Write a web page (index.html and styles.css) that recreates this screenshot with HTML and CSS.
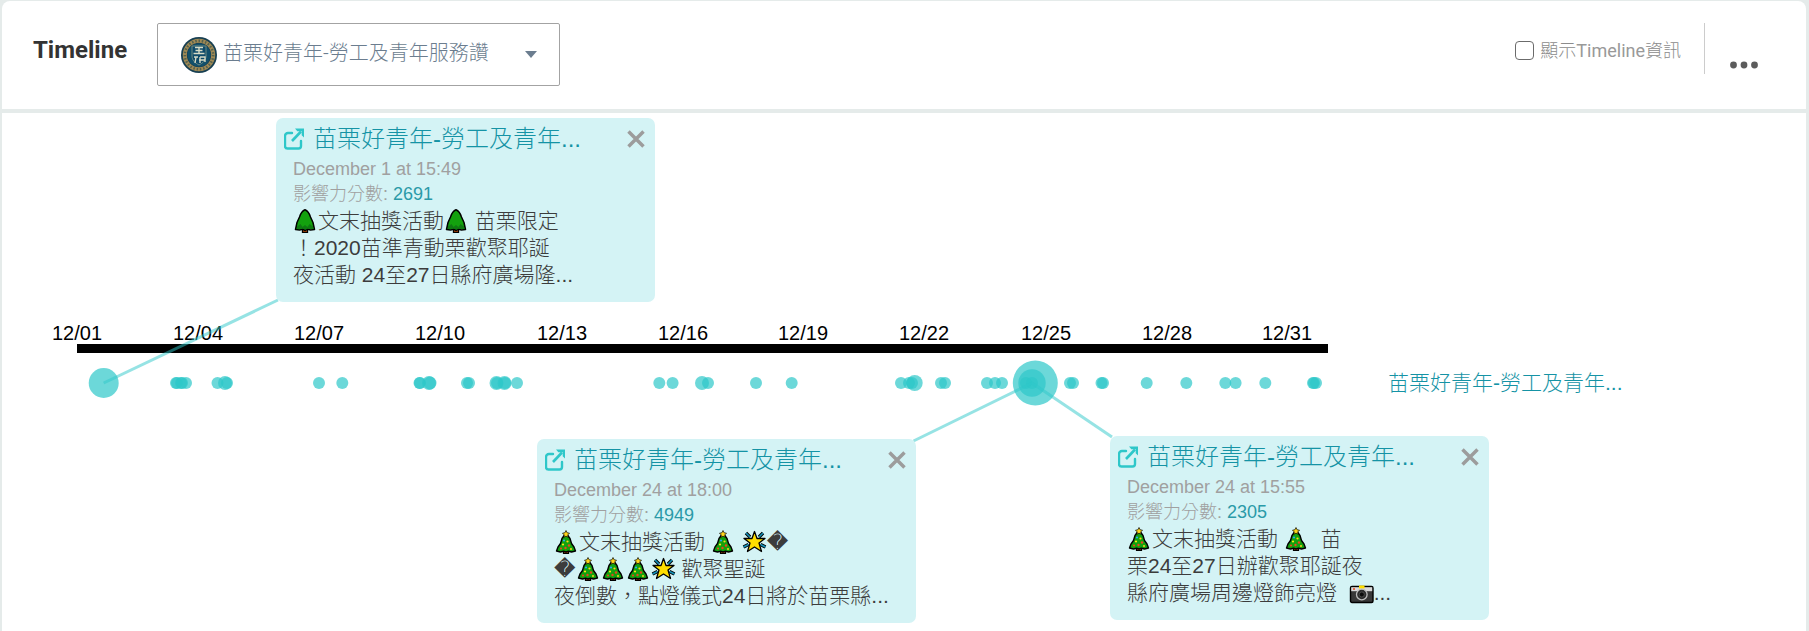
FILE: index.html
```html
<!DOCTYPE html>
<html lang="zh-Hant">
<head>
<meta charset="utf-8">
<title>Timeline</title>
<link rel="stylesheet" href="styles.css">
</head>
<body>
<svg class="sprite" aria-hidden="true">
  <symbol id="external" viewBox="0 0 20 22">
    <path d="M8 5H4a3 3 0 0 0-3 3v10a2.500 2.500 0 0 0 2.500 2.500h11a2.500 2.500 0 0 0 2.500-2.500v-5" fill="none" stroke="currentColor" stroke-width="2.400" stroke-linecap="round"/>
    <path d="M8 13L17 3.500" stroke="currentColor" stroke-width="2.600"/>
    <path d="M11 .5h9v9l-2.300-2.300V3.200h-4.400z" fill="currentColor"/>
  </symbol>
  <symbol id="pine" viewBox="0 0 24 24">
    <path d="M9 19h5v4.300H9z" fill="#d6570f" stroke="#000" stroke-width="1.300"/>
    <path d="M11.500.8C8.500 2 7 5 6 8L3.500 13.500 2 20.500l4 .5 3-.8 2.500 1.300 2.500-1.300 3 .8 4-.5-1.500-7L17 8c-1-3-2.500-6-5.500-7.200z" fill="#13a10e" stroke="#000" stroke-width="1.500" stroke-linejoin="round"/>
    <path d="M3.500 17.500l3.500-2.500 2 3 2.500-2 2.500 2 2-3 3.500 2.500.5 2.500-3 .3-2.500-.8-2.500 1.300-2.500-1.300-3 .8-3-.3z" fill="#0f7a12"/>
  </symbol>
  <symbol id="xmas" viewBox="0 0 24 24">
    <path d="M9 20h5v3.300H9z" fill="#c84a14" stroke="#000" stroke-width="1.200"/>
    <path d="M11.500 3L7.500 8.500 6 13.500 3.500 17 2 21l4 1 3-.8 2.500.8 2.500-.8 3 .8 4-1-1.500-4-2.500-3.500-1.500-5z" fill="#13a10e" stroke="#000" stroke-width="1.400" stroke-linejoin="round"/>
    <path d="M11.500.5l1.200 2.300 2.300.4-1.700 1.700.3 2.300-2.100-1-2.100 1 .3-2.300L8 3.200l2.300-.4z" fill="#ffd51a" stroke="#000" stroke-width=".7"/>
    <circle cx="9.500" cy="10.500" r="1.100" fill="#2aa5f0"/><circle cx="13" cy="11.500" r="1.100" fill="#ffd51a"/>
    <circle cx="8.500" cy="14.500" r="1.100" fill="#ffe81a"/><circle cx="14.500" cy="15.500" r="1.200" fill="#e8491d"/>
    <circle cx="6.500" cy="18.500" r="1.100" fill="#e8491d"/><circle cx="11" cy="18" r="1.200" fill="#e8491d"/>
    <circle cx="16.500" cy="19" r="1" fill="#ffd51a"/>
  </symbol>
  <symbol id="star" viewBox="0 0 24 24">
    <g stroke="#000" stroke-width="3.400"><path d="M3.500 3l4 4M20.500 3l-4 4M1 17l5-2.500M23 17l-5-2.500"/></g>
    <path d="M3.500 3l4 4M20.500 3l-4 4M1 17l5-2.500M23 17l-5-2.500" stroke="#1490b8" stroke-width="1.700"/>
    <path d="M12 1.500l2.500 7h8l-6 4.500 2.500 8.500L12 17l-7 4.500L7.500 13l-6-4.500h8z" fill="#ffde00" stroke="#000" stroke-width="1.300" stroke-linejoin="round"/>
  </symbol>
  <symbol id="camera" viewBox="0 0 24 24">
    <rect x="1" y="5.500" width="22.500" height="16" rx="1.500" fill="#383838" stroke="#000" stroke-width="1.400"/>
    <path d="M1.700 6.200h21v4h-21z" fill="#d9d9d9"/>
    <path d="M9.500 4.500h5.500v3H9.500z" fill="#ffde00"/>
    <circle cx="4.500" cy="8" r="1" fill="#e8491d"/>
    <circle cx="12.300" cy="13.500" r="5.300" fill="#2b2b2b" stroke="#bdbdbd" stroke-width="1.300"/>
    <circle cx="12.300" cy="13.500" r="2.500" fill="#0b0b0b" stroke="#666" stroke-width=".6"/>
  </symbol>
</svg>

<main class="panel">
  <header class="bar">
    <h1 class="bar-title">Timeline</h1>
    <label class="picker">
      <svg class="picker-logo" viewBox="0 0 36 36" aria-hidden="true">
        <circle cx="18" cy="18" r="18" fill="#173f52"/>
        <circle cx="18" cy="18" r="14.200" fill="none" stroke="#a08a55" stroke-width="4"/>
        <circle cx="18" cy="18" r="14.200" fill="none" stroke="#54614e" stroke-width="2.500" stroke-dasharray="1.500 1.800"/>
        <circle cx="18" cy="18" r="11.500" fill="#11506b"/>
        <path d="M11 9h14v10c0 4-3 7-7 9-4-2-7-5-7-9z" fill="#0d4a69" stroke="#6d8a83" stroke-width="1"/>
        <path d="M14 10.500h8M14.500 13.500h7M12.500 16.500h11M18 10v7M13 20h4M15 20l-1 6M19 20h5v5M19 20v6M18 23h6" fill="none" stroke="#d5dac5" stroke-width="1.400"/>
      </svg>
      <select class="picker-select" aria-label="粉絲專頁">
        <option>苗栗好青年-勞工及青年服務讚</option>
      </select>
      <svg class="picker-arrow" viewBox="0 0 12 7" aria-hidden="true"><path d="M0 0h12L6 7z" fill="currentColor"/></svg>
    </label>
    <div class="bar-tools">
      <label class="toggle"><input class="toggle-box" type="checkbox"><span>顯示<span class="latin">Timeline</span>資訊</span></label>
      <button class="more" type="button" aria-label="更多">
        <svg class="more-icon" viewBox="0 0 28 8" aria-hidden="true"><g fill="currentColor"><circle cx="3.500" cy="4" r="3.400"/><circle cx="14" cy="4" r="3.400"/><circle cx="24.500" cy="4" r="3.400"/></g></svg>
      </button>
    </div>
  </header>

  <section class="stage">
    <svg class="chart" viewBox="0 0 1640 518" aria-label="Timeline">
      <g class="ticks">
        <text x="75" y="227">12/01</text><text x="196" y="227">12/04</text><text x="317" y="227">12/07</text>
        <text x="438" y="227">12/10</text><text x="560" y="227">12/13</text><text x="681" y="227">12/16</text>
        <text x="801" y="227">12/19</text><text x="922" y="227">12/22</text><text x="1044" y="227">12/25</text>
        <text x="1165" y="227">12/28</text><text x="1285" y="227">12/31</text>
      </g>
      <rect x="75" y="231" width="1251" height="9"/>
      <g class="dots">
        <circle cx="101.700" cy="270" r="15"/>
        <circle cx="174" cy="270" r="6"/><circle cx="175" cy="270" r="6"/><circle cx="179" cy="270" r="6"/><circle cx="180" cy="270" r="6"/><circle cx="184" cy="270" r="6"/>
        <circle cx="215.500" cy="270" r="6"/><circle cx="223" cy="270" r="7"/><circle cx="225" cy="270" r="6"/>
        <circle cx="317" cy="270" r="6"/><circle cx="340.300" cy="270" r="6"/>
        <circle cx="417.500" cy="270" r="6"/><circle cx="418" cy="270" r="6"/><circle cx="427" cy="270" r="7"/><circle cx="428" cy="270" r="6.500"/>
        <circle cx="465" cy="270" r="6"/><circle cx="467" cy="270" r="6"/>
        <circle cx="494.500" cy="270" r="7"/><circle cx="495" cy="270" r="6"/><circle cx="502.500" cy="270" r="7"/><circle cx="503" cy="270" r="6"/><circle cx="515" cy="270" r="6"/>
        <circle cx="657.300" cy="270" r="6"/><circle cx="670.600" cy="270" r="6"/><circle cx="700" cy="270" r="7"/><circle cx="706" cy="270" r="6"/>
        <circle cx="754" cy="270" r="6"/><circle cx="789.700" cy="270" r="6"/>
        <circle cx="899" cy="270" r="6"/><circle cx="907" cy="270" r="6"/><circle cx="910" cy="270" r="6"/><circle cx="912.700" cy="270" r="8"/>
        <circle cx="939" cy="270" r="6"/><circle cx="943" cy="270" r="6"/>
        <circle cx="985" cy="270" r="6"/><circle cx="993" cy="270" r="6"/><circle cx="1000" cy="270" r="6"/>
        <circle cx="1033.300" cy="270" r="22.500"/><circle cx="1030" cy="270" r="13.700"/><circle cx="1024" cy="270" r="6"/><circle cx="1030" cy="270" r="6"/>
        <circle cx="1068" cy="270" r="6"/><circle cx="1071" cy="270" r="6"/><circle cx="1099.500" cy="270" r="6"/><circle cx="1101" cy="270" r="6"/>
        <circle cx="1144.700" cy="270" r="6"/><circle cx="1184.300" cy="270" r="6"/><circle cx="1223.300" cy="270" r="6"/><circle cx="1233.600" cy="270" r="6"/><circle cx="1263.300" cy="270" r="6"/>
        <circle cx="1311" cy="270" r="6"/><circle cx="1312" cy="270" r="6"/><circle cx="1314" cy="270" r="6"/>
      </g>
      <g class="links">
        <path d="M101.700 270L276 187M1030 270L911.500 328M1030 270L1110 324"/>
      </g>
      <text class="series" x="1386" y="277">苗栗好青年-勞工及青年...</text>
    </svg>

    <article class="card card-a">
      <div class="card-head">
        <a class="card-link" href="#"><svg class="card-icon" aria-hidden="true"><use href="#external"/></svg>苗栗好青年-勞工及青年...</a>
        <button class="close" type="button" aria-label="關閉"><svg class="close-icon" viewBox="0 0 18 18" aria-hidden="true"><path d="M1.500 1.500l15 15M16.500 1.500l-15 15"/></svg></button>
      </div>
      <div class="card-body">
        <p class="meta">December 1 at 15:49</p>
        <p class="meta">影響力分數: <span class="score">2691</span></p>
        <p class="post"><svg class="emoji"><use href="#pine"/></svg>文末抽獎活動<svg class="emoji"><use href="#pine"/></svg> 苗栗限定<br>！2020苗準青動栗歡聚耶誕<br>夜活動 24至27日縣府廣場隆...</p>
      </div>
    </article>

    <article class="card card-b">
      <div class="card-head">
        <a class="card-link" href="#"><svg class="card-icon" aria-hidden="true"><use href="#external"/></svg>苗栗好青年-勞工及青年...</a>
        <button class="close" type="button" aria-label="關閉"><svg class="close-icon" viewBox="0 0 18 18" aria-hidden="true"><path d="M1.500 1.500l15 15M16.500 1.500l-15 15"/></svg></button>
      </div>
      <div class="card-body">
        <p class="meta">December 24 at 18:00</p>
        <p class="meta">影響力分數: <span class="score">4949</span></p>
        <p class="post"><svg class="emoji"><use href="#xmas"/></svg>文末抽獎活動 <svg class="emoji"><use href="#xmas"/></svg> <svg class="emoji"><use href="#star"/></svg><span class="glyph">&#xFFFD;</span><br><span class="glyph">&#xFFFD;</span><svg class="emoji"><use href="#xmas"/></svg><svg class="emoji"><use href="#xmas"/></svg><svg class="emoji"><use href="#xmas"/></svg><svg class="emoji"><use href="#star"/></svg> 歡聚聖誕<br>夜倒數，點燈儀式24日將於苗栗縣...</p>
      </div>
    </article>

    <article class="card card-c">
      <div class="card-head">
        <a class="card-link" href="#"><svg class="card-icon" aria-hidden="true"><use href="#external"/></svg>苗栗好青年-勞工及青年...</a>
        <button class="close" type="button" aria-label="關閉"><svg class="close-icon" viewBox="0 0 18 18" aria-hidden="true"><path d="M1.500 1.500l15 15M16.500 1.500l-15 15"/></svg></button>
      </div>
      <div class="card-body">
        <p class="meta">December 24 at 15:55</p>
        <p class="meta">影響力分數: <span class="score">2305</span></p>
        <p class="post"><svg class="emoji"><use href="#xmas"/></svg>文末抽獎活動 <svg class="emoji"><use href="#xmas"/></svg>&nbsp; 苗<br>栗24至27日辦歡聚耶誕夜<br>縣府廣場周邊燈飾亮燈&nbsp; <svg class="emoji"><use href="#camera"/></svg>...</p>
      </div>
    </article>
  </section>
</main>
</body>
</html>
```

FILE: styles.css
```css
* { box-sizing: border-box; }

body {
  margin: 0;
  min-height: 100vh;
  display: flex;
  padding: 1px 3px 0 2px;
  background: #e5ebea;
  font-family: "Liberation Sans", "Noto Sans CJK TC", sans-serif;
  font-weight: 300;
}

.sprite { position: absolute; width: 0; height: 0; }

.panel {
  flex: 1;
  display: flex;
  flex-direction: column;
  background: #fff;
  border-radius: 8px 8px 0 0;
  overflow: hidden;
}

.bar {
  display: flex;
  align-items: flex-start;
  padding: 22px 48px 23px 31px;
  border-bottom: 4px solid #e5ebea;
  font-family: Roboto, "Noto Sans CJK TC", sans-serif;
}

.bar-title {
  margin: 0 30px 0 0;
  font-size: 24px;
  line-height: 54px;
  font-weight: 700;
  color: #333;
}

.picker {
  display: flex;
  align-items: center;
  width: 403px;
  height: 63px;
  padding: 0 22px 0 23px;
  border: 1px solid #a3a3a3;
  border-radius: 2px;
  color: #6b7d8f;
}

.picker-logo { width: 36px; height: 36px; flex: none; }

.picker-select {
  flex: 1;
  min-width: 0;
  height: 40px;
  padding: 0 0 4px 6px;
  appearance: none;
  border: 0;
  background: none;
  color: inherit;
  font-family: inherit;
  font-weight: inherit;
  font-size: 20px;
}

.picker-arrow { width: 12px; height: 7px; flex: none; }

.bar-tools { display: flex; margin-left: auto; }

.toggle {
  display: flex;
  align-items: center;
  gap: 6px;
  height: 51px;
  padding-right: 23px;
  border-right: 1px solid #ccc;
  font-size: 18px;
  color: #8c8c8c;
}

.latin { font-weight: 400; color: #999; }

.toggle-box {
  width: 19px;
  height: 19px;
  margin: 4px 0 0;
  appearance: none;
  border: 1px solid #6b6b6b;
  border-radius: 4px;
  background: #fff;
}

.more {
  display: flex;
  align-items: flex-end;
  height: 46px;
  margin-left: 25px;
  padding: 0;
  border: 0;
  background: none;
  color: #5c5c5c;
}

.more-icon { width: 28px; height: 8px; }

.stage { position: relative; flex: 1; }

.chart { display: block; width: 1640px; height: 518px; }

.ticks { font-size: 20px; font-weight: 400; text-anchor: middle; fill: #000; }
.dots { fill: #2ec7c9; fill-opacity: .7; }
.links { stroke: #2ec7c9; stroke-opacity: .5; stroke-width: 3; fill: none; }
.series { font-size: 21px; fill: #1593a5; }

.card {
  position: absolute;
  width: 379px;
  padding: 7px 10px 14px 8px;
  border-radius: 7px;
  background: #d4f3f5;
}

.card-a { left: 274px; top: 5px; }
.card-b { left: 535px; top: 326px; }
.card-c { left: 1108px; top: 323px; }

.card-head {
  display: flex;
  align-items: center;
  justify-content: space-between;
  height: 28px;
  margin-bottom: 3px;
}

.card-link {
  display: flex;
  align-items: center;
  gap: 9px;
  font-size: 24px;
  line-height: 28px;
  color: #1593a5;
  text-decoration: none;
}

.card-icon { width: 20px; height: 22px; color: #2ec7c9; }

.close { display: flex; padding: 0; border: 0; background: none; }
.close-icon { width: 18px; height: 18px; stroke: #9c9c9c; stroke-width: 3.5; }

.card-body { padding-left: 9px; white-space: nowrap; }

.meta { margin: 0; font-size: 18px; line-height: 26px; color: #a0a0a0; }
.meta:nth-child(2) { line-height: 25px; }
.score { color: #2a9aa8; }

.post { margin: 0; font-size: 21px; line-height: 27px; color: #3c3c3c; }

.emoji { width: 25px; height: 24px; vertical-align: -5px; }
.glyph { font-family: "DejaVu Sans", sans-serif; line-height: 1; }
```
